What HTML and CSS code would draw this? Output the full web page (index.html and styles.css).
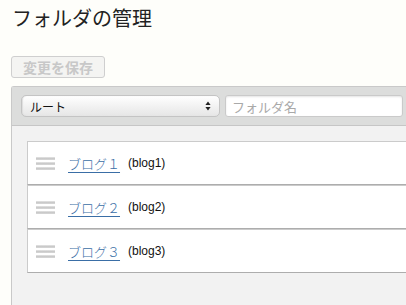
FILE: index.html
```html
<!DOCTYPE html>
<html lang="ja">
<head>
    <meta charset="UTF-8">
    <meta name="viewport" content="width=device-width, initial-scale=1.0">
    <title>フォルダの管理</title>
    <link rel="stylesheet" href="styles.css">
</head>
<body>
    <h1>フォルダの管理</h1>
    <div class="actions">
        <button class="save-btn" disabled>変更を保存</button>
    </div>
    <div class="folder-panel">
        <div class="panel-head">
            <div class="select-wrap">
                <select class="parent-select">
                    <option>ルート</option>
                </select>
                <span class="select-arrow">
                    <svg width="6" height="10" viewBox="0 0 6 10">
                        <path d="M3 0.5 L5.6 4 L0.4 4 Z M3 9.5 L5.6 6 L0.4 6 Z" fill="#222"/>
                    </svg>
                </span>
            </div>
            <input class="name-input" type="text" placeholder="フォルダ名">
        </div>
        <ul class="folder-list">
            <li class="folder-item">
                <span class="handle"><i></i><i></i><i></i></span>
                <a href="#">ブログ１</a>
                <span class="slug">(blog1)</span>
            </li>
            <li class="folder-item">
                <span class="handle"><i></i><i></i><i></i></span>
                <a href="#">ブログ２</a>
                <span class="slug">(blog2)</span>
            </li>
            <li class="folder-item">
                <span class="handle"><i></i><i></i><i></i></span>
                <a href="#">ブログ３</a>
                <span class="slug">(blog3)</span>
            </li>
        </ul>
    </div>
</body>
</html>
```

FILE: styles.css
```css
html {
    overflow: hidden;
}

body {
    margin: 0;
    padding: 0 0 0 11px;
    background-color: #fefefa;
    color: #222;
    font-family: 'Liberation Sans', 'Noto Sans CJK JP', sans-serif;
    overflow: hidden;
    height: 305px;
    box-sizing: border-box;
    display: flex;
    flex-direction: column;
}

h1 {
    font-family: 'Noto Sans CJK JP', sans-serif;
    font-size: 20px;
    font-weight: normal;
    line-height: 28px;
    margin: 4px 0 0 1px;
    color: #222;
}

.actions {
    margin-top: 24px;
}

.save-btn {
    width: 94px;
    height: 22px;
    padding: 0;
    border: 1px solid #cfcfcf;
    border-radius: 3px;
    background-color: #f4f4f2;
    color: #c8c8c8;
    font-family: 'Noto Sans CJK JP', sans-serif;
    font-size: 14px;
    font-weight: bold;
    line-height: 20px;
}

.folder-panel {
    flex: 1;
    min-height: 0;
    margin-top: 8px;
    border: 1px solid #c9c9c9;
    border-right: none;
    border-bottom: none;
    border-radius: 3px 0 0 0;
    background-color: #f2f2f2;
}

.panel-head {
    display: flex;
    gap: 5px;
    padding: 8px 0 8px 9px;
    background-color: #dcdddc;
    border-bottom: 1px solid #c6c6c6;
}

.select-wrap {
    position: relative;
    width: 199px;
    height: 22px;
}

.parent-select {
    appearance: none;
    -webkit-appearance: none;
    width: 100%;
    height: 100%;
    padding: 0 0 0 8px;
    border: 1px solid #c4c4c4;
    border-radius: 5px;
    background: linear-gradient(#ffffff, #f1f1f1 55%, #e6e6e6);
    box-shadow: inset 1px 0 1px #ddd;
    font-family: 'Noto Sans CJK JP', sans-serif;
    font-size: 12px;
    color: #111;
}

.select-arrow {
    position: absolute;
    right: 9px;
    top: 6px;
    line-height: 0;
}

.name-input {
    width: 178px;
    height: 22px;
    box-sizing: border-box;
    padding: 0 6px;
    border: 1px solid #cacaca;
    border-radius: 3px;
    background-color: #fff;
    box-shadow: inset 0 1px 2px #e4e4e4;
    font-family: 'Noto Sans CJK JP', sans-serif;
    font-size: 13px;
}

.name-input::placeholder {
    color: #a9a9a9;
}

.folder-list {
    list-style: none;
    margin: 0;
    padding: 15px 0 0 15px;
}

.folder-item {
    display: flex;
    align-items: center;
    height: 42px;
    background-color: #fff;
    border: 1px solid #cbcbcb;
    border-bottom-color: #adadad;
    border-right: none;
}

.handle {
    display: flex;
    flex-direction: column;
    gap: 2px;
    width: 19px;
    margin: 1px 13px 0 8px;
}

.handle i {
    display: block;
    height: 3px;
    background: linear-gradient(#e6e6e6, #c4c4c4 60%, #dedede);
}

.folder-item a {
    color: #3a6ea6;
    font-family: 'Noto Sans CJK JP', sans-serif;
    font-size: 13px;
    font-weight: 300;
    text-decoration: underline;
    text-underline-offset: 3px;
}

.slug {
    margin-left: 8px;
    font-size: 12px;
    color: #111;
}
```
